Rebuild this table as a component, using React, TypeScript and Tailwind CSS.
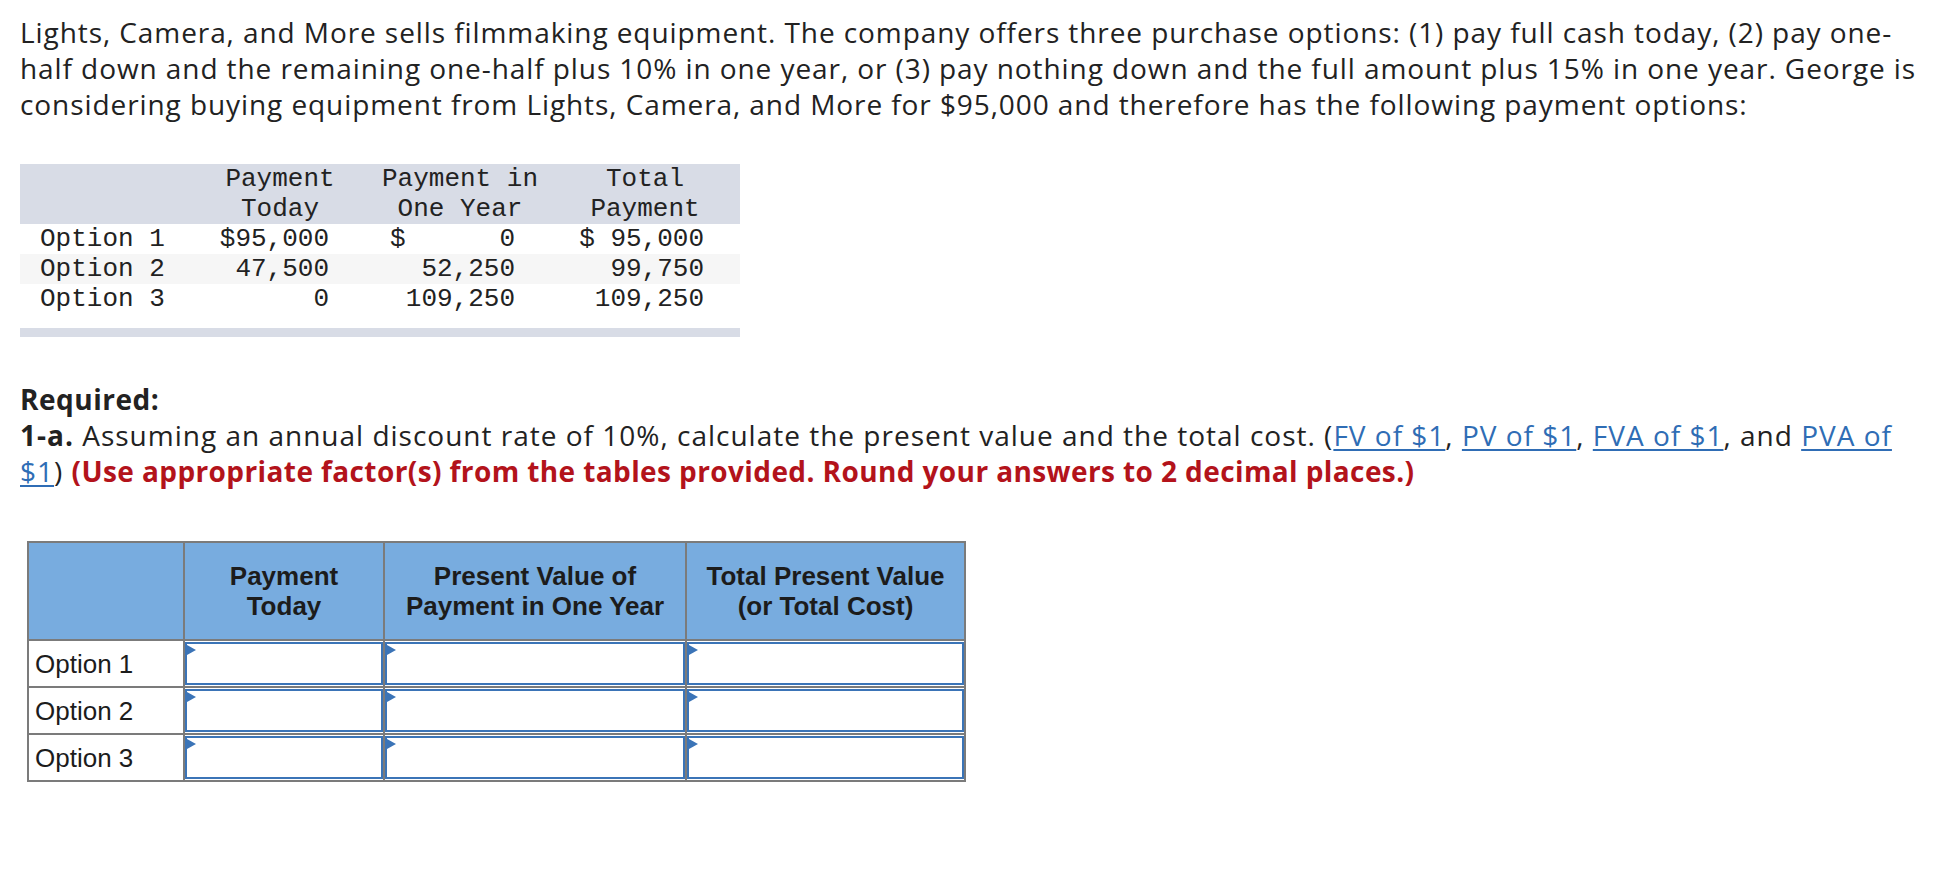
import React from 'react';

const given = [
  { label: 'Option 1', today: '$95,000', year: ['$', '0'], total: '$ 95,000', shade: false },
  { label: 'Option 2', today: '47,500', year: ['', '52,250'], total: '99,750', shade: true },
  { label: 'Option 3', today: '0', year: ['', '109,250'], total: '109,250', shade: false },
];

function Link({ children }: { children: React.ReactNode }) {
  return <a href="#" className="text-[#2f6db5] underline underline-offset-[3px] decoration-[1.5px]">{children}</a>;
}

function AnswerCell() {
  return (
    <td className="border-2 border-[#7b7b7b] p-0 h-[46px]">
      <div className="relative my-[1px] h-[43px] border-2 border-[#3b74b7] bg-white">
        <span className="absolute left-0 top-[1px] w-0 h-0 border-y-[5px] border-y-transparent border-l-[9px] border-l-[#3b74b7]" />
        <input className="w-full h-full outline-none px-2 text-[22px] font-['Liberation_Sans',Arial,sans-serif]" />
      </div>
    </td>
  );
}

export default function App() {
  return (
    <div className="min-h-screen bg-white text-[#222] pl-[20px] pr-[20px] pt-[14px] font-['Open_Sans','Noto_Sans',sans-serif]">
      <p className="text-[28px] leading-[36px] tracking-[0.92px]">
        Lights, Camera, and More sells filmmaking equipment. The company offers three purchase options: (1) pay full cash today, (2) pay one-half down and the remaining one-half plus 10% in one year, or (3) pay nothing down and the full amount plus 15% in one year. George is considering buying equipment from Lights, Camera, and More for $95,000 and therefore has the following payment options:
      </p>

      {/* given data */}
      <div className="mt-[42px] w-[720px] font-['Liberation_Mono','Courier_New',monospace] text-[26px] leading-[30px] text-[#222]">
        <div className="grid grid-cols-[170px_180px_180px_190px] bg-[#d8dce6]">
          <div />
          <div className="text-center">Payment<br />Today</div>
          <div className="text-center">Payment in<br />One Year</div>
          <div className="text-center">Total<br />Payment</div>
        </div>
        {given.map((r) => (
          <div key={r.label} className={`grid grid-cols-[170px_180px_180px_190px] ${r.shade ? 'bg-[#f6f6f6]' : 'bg-white'}`}>
            <div className="pl-[20px] whitespace-pre">{r.label}</div>
            <div className="text-right pr-[41px]">{r.today}</div>
            <div className="flex justify-between pl-[20px] pr-[35px]">
              <span>{r.year[0]}</span>
              <span>{r.year[1]}</span>
            </div>
            <div className="text-right pr-[36px] whitespace-pre">{r.total}</div>
          </div>
        ))}
        <div className="h-[14px]" />
        <div className="h-[9px] bg-[#d8dce6]" />
      </div>

      {/* required */}
      <div className="mt-[44px] text-[28px] leading-[36px] tracking-[1px]">
        <p className="font-bold tracking-[0.5px]">Required:</p>
        <p>
          <span className="font-bold">1-a.</span> Assuming an annual discount rate of 10%, calculate the present value and the total cost. (<Link>FV of $1</Link>, <Link>PV of $1</Link>, <Link>FVA of $1</Link>, and <Link>PVA of $1</Link>) <span className="font-bold text-[#b3131b] tracking-[0.4px]">(Use appropriate factor(s) from the tables provided. Round your answers to 2 decimal places.)</span>
        </p>
      </div>

      {/* answer table */}
      <table className="mt-[52px] ml-[7px] border-collapse border-2 border-[#7b7b7b] font-['Liberation_Sans',Arial,sans-serif] text-[26px]">
        <colgroup>
          <col className="w-[156px]" />
          <col className="w-[200px]" />
          <col className="w-[302px]" />
          <col className="w-[279px]" />
        </colgroup>
        <thead>
          <tr className="bg-[#78acdf] h-[98px]">
            <th className="border-2 border-[#7b7b7b]" />
            <th className="border-2 border-[#7b7b7b] font-bold leading-[30px] text-[#1c1c1c]">Payment<br />Today</th>
            <th className="border-2 border-[#7b7b7b] font-bold leading-[30px] text-[#1c1c1c]">Present Value of<br />Payment in One Year</th>
            <th className="border-2 border-[#7b7b7b] font-bold leading-[30px] text-[#1c1c1c]">Total Present Value<br />(or Total Cost)</th>
          </tr>
        </thead>
        <tbody>
          {['Option 1', 'Option 2', 'Option 3'].map((o) => (
            <tr key={o}>
              <td className="border-2 border-[#7b7b7b] pl-[6px] text-left text-[#1c1c1c] leading-[30px]">{o}</td>
              <AnswerCell />
              <AnswerCell />
              <AnswerCell />
            </tr>
          ))}
        </tbody>
      </table>
    </div>
  );
}
